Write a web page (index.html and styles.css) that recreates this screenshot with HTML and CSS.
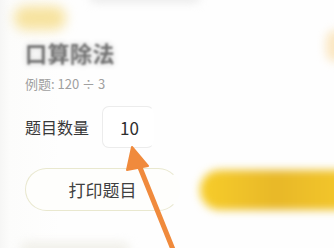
FILE: index.html
```html
<!DOCTYPE html>
<html lang="zh">
<head>
<meta charset="utf-8">
<link rel="stylesheet" href="styles.css">
</head>
<body>
<div class="page">
  <div class="blob blob-top"></div>
  <div class="blob blob-right"></div>
  <div class="blob blob-gray"></div>
  <h1 class="title">口算除法</h1>
  <p class="example">例题: 120 ÷ 3</p>
  <div class="count-row">
    <span class="label">题目数量</span>
    <div class="input">10</div>
  </div>
  <div class="actions">
    <div class="btn-outline">打印题目</div>
    <div class="btn-primary"></div>
  </div>
  <div class="blob blob-bottom"></div>
  <svg class="arrow" width="334" height="248" viewBox="0 0 334 248">
    <line x1="137" y1="160" x2="174" y2="252" stroke="#f08a3c" stroke-width="5" stroke-linecap="round"/>
    <polygon points="132,147 148,166 127,170" fill="#f08a3c" stroke="#f08a3c" stroke-width="2" stroke-linejoin="round"/>
  </svg>
</div>
</body>
</html>
```
FILE: styles.css
```css
html, body {
  margin: 0;
  padding: 0;
  background: #fdfdfc;
  overflow: hidden;
}
.page {
  position: relative;
  width: 334px;
  height: 248px;
  box-sizing: border-box;
  padding: 40px 0 0 25px;
  font-family: "Noto Sans CJK SC", "Noto Sans", sans-serif;
  overflow: hidden;
  background: linear-gradient(90deg, #f6f6f5 0px, #fcfcfb 10px, #fefefe 60px);
}
.blob {
  position: absolute;
  border-radius: 20px;
}
.blob-top {
  left: 14px;
  top: 6px;
  width: 52px;
  height: 24px;
  background: #f7e3a0;
  filter: blur(6px);
}
.blob-right {
  left: 326px;
  top: 30px;
  width: 20px;
  height: 32px;
  background: #fbe7c2;
  filter: blur(5px);
}
.blob-gray {
  left: 90px;
  top: -8px;
  width: 110px;
  height: 10px;
  background: #e8e8e8;
  filter: blur(5px);
}
.blob-bottom {
  left: 20px;
  top: 242px;
  width: 110px;
  height: 16px;
  background: #f1f0ea;
  filter: blur(5px);
}
.title {
  margin: 0;
  font-size: 22px;
  line-height: 24px;
  font-weight: 700;
  color: #727272;
  filter: blur(0.8px);
  letter-spacing: 0.5px;
  text-shadow: 0 0 6px rgba(0, 0, 0, 0.22);
}
.example {
  margin: 13px 0 0;
  font-size: 13px;
  line-height: 14px;
  color: #a0a0a0;
}
.count-row {
  display: flex;
  align-items: center;
  gap: 13px;
  margin-top: 15px;
}
.label {
  font-size: 16px;
  color: #383838;
}
.input {
  box-sizing: border-box;
  width: 52px;
  height: 42px;
  border: 1px solid #ececec;
  border-right-color: transparent;
  border-radius: 7px;
  padding-left: 17px;
  display: flex;
  align-items: center;
  font-size: 17px;
  color: #2e2e2e;
  background: #fff;
}
.actions {
  display: flex;
  gap: 20px;
  margin-top: 20px;
  align-items: center;
}
.btn-outline {
  box-sizing: border-box;
  width: 155px;
  height: 43px;
  flex: none;
  border: 1px solid #e9e8cf;
  border-right-color: transparent;
  border-radius: 22px;
  display: flex;
  align-items: center;
  justify-content: center;
  font-size: 17px;
  color: #404040;
  background: #fefefc;
}
.btn-primary {
  flex: none;
  width: 170px;
  height: 40px;
  border-radius: 20px;
  background: linear-gradient(90deg, #f7cd2a 0%, #e8b828 45%, #f2c52a 80%, #f7cb2c 100%);
  filter: blur(4px);
}
.arrow {
  position: absolute;
  left: 0;
  top: 0;
}
```
